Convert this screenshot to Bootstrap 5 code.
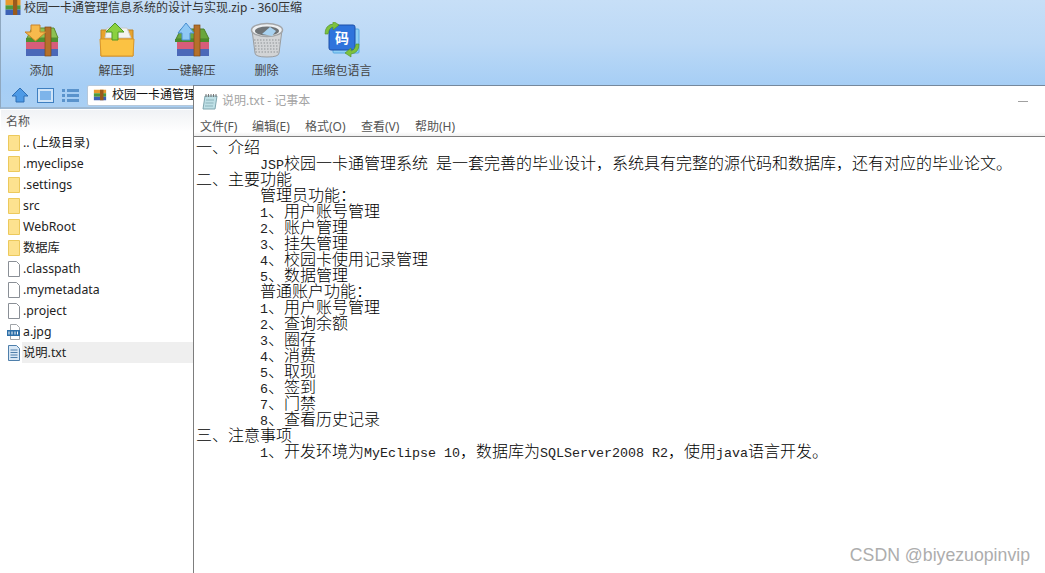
<!DOCTYPE html>
<html lang="zh">
<head>
<meta charset="utf-8">
<title>说明.txt - 记事本</title>
<link rel="stylesheet" href="https://cdn.jsdelivr.net/npm/bootstrap@5.3.0/dist/css/bootstrap.min.css">
<style>
html,body{height:100%;overflow:hidden}
body{background:#fff;font-family:"Noto Sans","Noto Sans CJK SC",sans-serif;font-size:12px;color:#222}
.zipapp{position:relative;width:1045px;height:573px;overflow:hidden}
.zip-head{height:109px;background:linear-gradient(#c7dff7 0,#bcd9f6 40%,#a6cef5 85px,#a9cff3 100%);border-bottom:2px solid #9db8d2;border-left:1px solid #8fa8c0}
.zip-title{height:15px;line-height:14px;padding-left:3px;font-size:12px;color:#333}
.title-ic{margin-right:2px}
.zip-tools{height:69px;padding-left:3px}
.zip-tool{width:75px;height:69px;color:#444;padding-top:7px}
.zip-tool svg{display:block;height:36px}
.zip-tool span{margin-top:5px;line-height:16px}
.zip-nav{height:22px;padding-left:10px}
.nav-ic{margin-right:8px}
.addr{width:160px;height:21px;background:#fff;border:1px solid #b5c8db;border-radius:2px;padding-left:5px;white-space:nowrap;color:#111}
.addr svg{margin-right:5px;flex:none}
.side{width:193px;padding-left:1px;padding-top:1px}
.side-head{height:22px;line-height:24px;padding-left:5px;font-size:12px;color:#555;background:linear-gradient(#f0f2f5,#fff)}
.file-row{height:21px;line-height:21px;padding-left:6px;color:#222;font-size:12.3px}
.file-row svg{flex:none;margin-right:2px}
.file-row b{font-weight:400;flex:1;padding-left:1px;margin-left:-1px}
.file-row.sel b{background:#efefef;height:21px}
.pad{position:absolute;left:193px;top:85px;width:852px;height:488px;background:#fff;border-top:1px solid #76889c;border-left:1px solid #7d7d7d}
.pad-title{height:30px;padding-left:8px;color:#a4a4a4;font-size:12px;line-height:16px}
.pad-title svg{margin-right:4px}
.pad-min{margin-left:auto;margin-right:17px;width:10px;height:1px;background:#a0a0a0}
.pad-menu{height:21px;padding-left:6px;color:#555;line-height:22px;font-size:12px;border-bottom:1px solid #7d7d7d;background:linear-gradient(#fff 80%,#f0f0f0)}
.pad-menu span:nth-child(1){width:52px}
.pad-menu span:nth-child(2){width:53px}
.pad-menu span:nth-child(3){width:56px}
.pad-menu span:nth-child(4){width:54px}
.pad-text{margin:1px 0 0 2px;font-family:"Noto Sans CJK SC",sans-serif;font-size:16px;line-height:16px;color:#000;white-space:pre;tab-size:64px;font-weight:300}
.pad-text i{font-style:normal;font-family:"Liberation Mono",monospace;font-size:13.33px;line-height:0;color:#222}
.mark-csdn{position:absolute;right:15px;top:544px;font-family:"Liberation Sans",sans-serif;font-size:17.7px;line-height:22px;color:#adadad}
</style>
</head>
<body>
<div class="zipapp">
  <div class="zip-head">
    <div class="zip-title d-flex align-items-center">
      <svg width="18" height="15" viewBox="0 0 16 14" class="flex-shrink-0 title-ic"><rect x="1" y="0" width="14" height="5" fill="#e89a2e"/><rect x="1" y="5" width="14" height="4" fill="#4f9a3a"/><rect x="1" y="9" width="14" height="5" fill="#3d62b5"/><rect x="8" y="0" width="4" height="14" fill="#9a5a1c"/></svg>
      <span>校园一卡通管理信息系统的设计与实现.zip - 360压缩</span>
    </div>
    <div class="zip-tools d-flex">
      <div class="zip-tool d-flex flex-column align-items-center">
        <svg width="36" height="36" viewBox="0 0 36 36"><path d="M3 16 8 6h22l4 10z" fill="#8cc152" stroke="#5d8a2f"/><rect x="2" y="16" width="32" height="4" fill="#4e9130"/><rect x="2" y="20" width="32" height="7" fill="#d75d7a"/><rect x="2" y="27" width="32" height="7" fill="#4b68b8"/><rect x="21" y="5" width="6" height="29" fill="#b5712a" stroke="#7f4a14" stroke-width=".7"/><path d="M7 3h9v7h6L11.500 19 1 10h6z" fill="#f6ba4d" stroke="#c9822b"/></svg>
        <span>添加</span>
      </div>
      <div class="zip-tool d-flex flex-column align-items-center">
        <svg width="36" height="36" viewBox="0 0 36 36"><path d="M2 8h32v26H2z" fill="#e8a32c" stroke="#c08525"/><path d="M8 6h20l4 10H6z" fill="#f4f4f2" stroke="#c9c9c9"/><path d="M1 17h34l-1 17H2z" fill="#fbc243" stroke="#d9962a"/><path d="M13 18v-8H7L16 1l9 9h-6v8z" fill="#8bd13f" stroke="#4e9628"/></svg>
        <span>解压到</span>
      </div>
      <div class="zip-tool d-flex flex-column align-items-center">
        <svg width="36" height="36" viewBox="0 0 36 36"><path d="M2 17 7 7h23l5 10z" fill="#6aa63e" stroke="#4b7f29"/><rect x="1" y="17" width="34" height="3" fill="#4b8a2c"/><rect x="3" y="20" width="32" height="7" fill="#d75d7a"/><rect x="3" y="27" width="32" height="7" fill="#4b68b8"/><rect x="20" y="3" width="6" height="31" fill="#b5712a" stroke="#7f4a14" stroke-width=".7"/><path d="M8 18v-7H4l8-10 8 10h-4v7z" fill="#8fc8f5" stroke="#4a8fd1"/></svg>
        <span>一键解压</span>
      </div>
      <div class="zip-tool d-flex flex-column align-items-center">
        <svg width="34" height="36" viewBox="0 0 34 36"><path d="M2 8 5 31q0 4 12 4t12-4l3-23z" fill="#d2d4d6" stroke="#9a9da0"/><g stroke="#8f9396" stroke-dasharray="1.500 1.500"><path d="M4 18h26M4.500 21h25M5 24h24M5 27h24M5.500 30h23"/></g><ellipse cx="17" cy="8" rx="15.500" ry="6.500" fill="#eef0f2" stroke="#a3a6a9" stroke-width="1.500"/><ellipse cx="17" cy="9" rx="12" ry="4.500" fill="#6f7477"/><path d="M12 12l8-7 6 4-4 5z" fill="#a9d2f0"/></svg>
        <span>删除</span>
      </div>
      <div class="zip-tool d-flex flex-column align-items-center">
        <svg width="36" height="36" viewBox="0 0 36 36"><rect x="9" y="7" width="26" height="24" rx="1" fill="#8fd0f5" stroke="#55a7e0"/><rect x="5" y="3" width="26" height="25" rx="2" fill="#2f74dc" stroke="#1d4fa8"/><path d="M1 12Q1 3 9 2V-1l6 4-6 5V5Q5 6 4 12z" fill="#7ec23d" stroke="#4f8f26" stroke-width=".6"/><path d="M35 22q0 9-8 10v3l-6-4 6-5v3q4-1 5-7z" fill="#7ec23d" stroke="#4f8f26" stroke-width=".6"/><text x="18" y="21" text-anchor="middle" font-size="14" font-weight="700" fill="#fff" font-family="Noto Sans CJK SC">码</text></svg>
        <span>压缩包语言</span>
      </div>
    </div>
    <div class="zip-nav d-flex align-items-center">
      <svg class="nav-ic" width="18" height="16" viewBox="0 0 18 16"><path d="M9 1 17 9h-4v6H5V9H1z" fill="#4d9ae6" stroke="#2e6fb5"/></svg>
      <svg class="nav-ic" width="17" height="15" viewBox="0 0 17 15"><rect x=".5" y=".5" width="16" height="14" fill="#cfe4f8" stroke="#3f7fc0"/><rect x="3" y="3" width="11" height="9" fill="#7db4ea"/></svg>
      <svg class="nav-ic" width="17" height="15" viewBox="0 0 17 15" fill="#5a93cc"><rect x="0" y="1" width="3" height="3"/><rect x="5" y="1" width="12" height="3"/><rect x="0" y="6" width="3" height="3"/><rect x="5" y="6" width="12" height="3"/><rect x="0" y="11" width="3" height="3"/><rect x="5" y="11" width="12" height="3"/></svg>
      <div class="addr d-flex align-items-center">
        <svg width="14" height="14" viewBox="0 0 16 14"><rect x="1" y="1" width="14" height="4" fill="#e89a2e"/><rect x="1" y="5" width="14" height="4" fill="#4f9a3a"/><rect x="1" y="9" width="14" height="4" fill="#3d62b5"/><rect x="8" y="1" width="4" height="12" fill="#9a5a1c"/></svg>
        <span>校园一卡通管理系统</span>
      </div>
    </div>
  </div>

  <div class="side">
    <div class="side-head">名称</div>
    <div class="file-row d-flex align-items-center"><svg width="14" height="18" viewBox="0 0 14 18"><path d="M1.500 1.500h11v15h-11z" fill="#fde28f" stroke="#ecc95c"/></svg><b>.. (上级目录)</b></div>
    <div class="file-row d-flex align-items-center"><svg width="14" height="18" viewBox="0 0 14 18"><path d="M1.500 1.500h11v15h-11z" fill="#fde28f" stroke="#ecc95c"/></svg><b>.myeclipse</b></div>
    <div class="file-row d-flex align-items-center"><svg width="14" height="18" viewBox="0 0 14 18"><path d="M1.500 1.500h11v15h-11z" fill="#fde28f" stroke="#ecc95c"/></svg><b>.settings</b></div>
    <div class="file-row d-flex align-items-center"><svg width="14" height="18" viewBox="0 0 14 18"><path d="M1.500 1.500h11v15h-11z" fill="#fde28f" stroke="#ecc95c"/></svg><b>src</b></div>
    <div class="file-row d-flex align-items-center"><svg width="14" height="18" viewBox="0 0 14 18"><path d="M1.500 1.500h11v15h-11z" fill="#fde28f" stroke="#ecc95c"/></svg><b>WebRoot</b></div>
    <div class="file-row d-flex align-items-center"><svg width="14" height="18" viewBox="0 0 14 18"><path d="M1.500 1.500h11v15h-11z" fill="#fde28f" stroke="#ecc95c"/></svg><b>数据库</b></div>
    <div class="file-row d-flex align-items-center"><svg width="14" height="18" viewBox="0 0 14 18"><path d="M1.500 1.500h8l3 3v12h-11z" fill="#fff" stroke="#8a8f96"/></svg><b>.classpath</b></div>
    <div class="file-row d-flex align-items-center"><svg width="14" height="18" viewBox="0 0 14 18"><path d="M1.500 1.500h8l3 3v12h-11z" fill="#fff" stroke="#8a8f96"/></svg><b>.mymetadata</b></div>
    <div class="file-row d-flex align-items-center"><svg width="14" height="18" viewBox="0 0 14 18"><path d="M1.500 1.500h8l3 3v12h-11z" fill="#fff" stroke="#8a8f96"/></svg><b>.project</b></div>
    <div class="file-row d-flex align-items-center"><svg width="14" height="18" viewBox="0 0 14 18"><path d="M3.500 1.500h6l3 3v12h-9z" fill="#fff" stroke="#a0a4a8"/><rect x="0" y="7" width="13" height="6" fill="#2d6fa8"/><path d="M2 8.500v3M5 8.500v3M8 8.500v3M10.500 8.500v3" stroke="#fff"/></svg><b>a.jpg</b></div>
    <div class="file-row sel d-flex align-items-center"><svg width="14" height="18" viewBox="0 0 14 18"><path d="M1.500 1.500h8l3 3v12h-11z" fill="#d9e8f6" stroke="#4f7fab"/><path d="M3.500 6h7M3.500 8.500h7M3.500 11h7M3.500 13.500h7" stroke="#4f7fab"/></svg><b>说明.txt</b></div>
  </div>

  <div class="pad">
    <div class="pad-title d-flex align-items-center">
      <svg width="16" height="17" viewBox="0 0 16 17"><path d="M3 3h12l-2 13H1z" fill="#bfe0e6" stroke="#7fa5ae"/><path d="M4 1v3M6.500 1v3M9 1v3M11.500 1v3M14 1v3" stroke="#777"/><path d="M4 7h8M3.500 10h8M3 13h8" stroke="#8cb3bb"/></svg>
      <span>说明.txt - 记事本</span>
      <span class="pad-min"></span>
    </div>
    <div class="pad-menu d-flex"><span>文件(F)</span><span>编辑(E)</span><span>格式(O)</span><span>查看(V)</span><span>帮助(H)</span></div>
<div class="pad-text">一、介绍
	<i>JSP</i>校园一卡通管理系统<i> </i>是一套完善的毕业设计，系统具有完整的源代码和数据库，还有对应的毕业论文。
二、主要功能
	管理员功能：
	<i>1</i>、用户账号管理
	<i>2</i>、账户管理
	<i>3</i>、挂失管理
	<i>4</i>、校园卡使用记录管理
	<i>5</i>、数据管理
	普通账户功能：
	<i>1</i>、用户账号管理
	<i>2</i>、查询余额
	<i>3</i>、圈存
	<i>4</i>、消费
	<i>5</i>、取现
	<i>6</i>、签到
	<i>7</i>、门禁
	<i>8</i>、查看历史记录
三、注意事项
	<i>1</i>、开发环境为<i>MyEclipse 10</i>，数据库为<i>SQLServer2008 R2</i>，使用<i>java</i>语言开发。</div>
  </div>
  <div class="mark-csdn">CSDN @biyezuopinvip</div>
</div>
<script src="https://cdn.jsdelivr.net/npm/bootstrap@5.3.0/dist/js/bootstrap.bundle.min.js"></script>
</body>
</html>
